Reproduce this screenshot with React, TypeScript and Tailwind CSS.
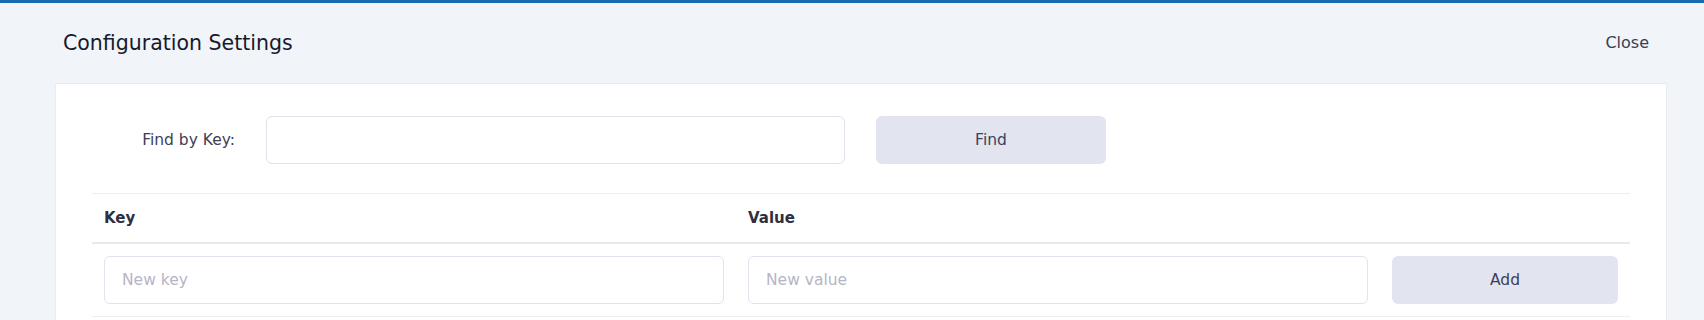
export default function App() {
	return (
		<div className="min-h-screen bg-[#f1f4f8] border-t-[3px] border-[#1a69b3] font-['DejaVu_Sans',sans-serif]">
			<div className="h-[80px] flex items-center justify-between pl-[63px] pr-[55px]">
				<h1 className="text-[20.5px] text-[#161a2c]">Configuration Settings</h1>
				<button className="text-[16px] text-[#3a3d55]">Close</button>
			</div>

			<div className="ml-[55px] mr-[37px] bg-white border border-[#e9ebf0] px-[36px] pt-[32px] pb-10">
				<div className="flex items-center">
					<label className="w-[143px] text-right text-[15.5px] text-[#3d4055] pt-[2px]">Find by Key:</label>
					<input className="ml-[31px] w-[579px] h-[48px] rounded-md border border-[#e0e2ec] px-4 text-[15px] outline-none" />
					<button className="ml-[31px] w-[230px] h-[48px] rounded-md bg-[#e2e5ef] text-[15.5px] text-[#3c4060] pt-[2px]">
						Find
					</button>
				</div>

				<div className="mt-[29px] border-t border-[#eceef2]">
					<div className="grid grid-cols-[1fr_1fr_250px] h-[50px] items-center border-b-2 border-[#e8eaf0]">
						<div className="px-3 pt-[1px] text-[15px] font-bold text-[#2e2f42]">Key</div>
						<div className="px-3 pt-[1px] text-[15px] font-bold text-[#2e2f42]">Value</div>
						<div />
					</div>
					<div className="grid grid-cols-[1fr_1fr_250px] py-3 border-b border-[#eceef2]">
						<div className="px-3">
							<input
								placeholder="New key"
								className="w-full h-[48px] rounded-md border border-[#e0e2ec] px-[17px] text-[15.5px] placeholder:text-[#b5b5c6] outline-none"
							/>
						</div>
						<div className="px-3">
							<input
								placeholder="New value"
								className="w-full h-[48px] rounded-md border border-[#e0e2ec] px-[17px] text-[15.5px] placeholder:text-[#b5b5c6] outline-none"
							/>
						</div>
						<div className="px-3">
							<button className="w-full h-[48px] rounded-md bg-[#e2e5ef] text-[15.5px] text-[#3c4060] pt-[2px]">Add</button>
						</div>
					</div>
				</div>
			</div>
		</div>
	);
}
